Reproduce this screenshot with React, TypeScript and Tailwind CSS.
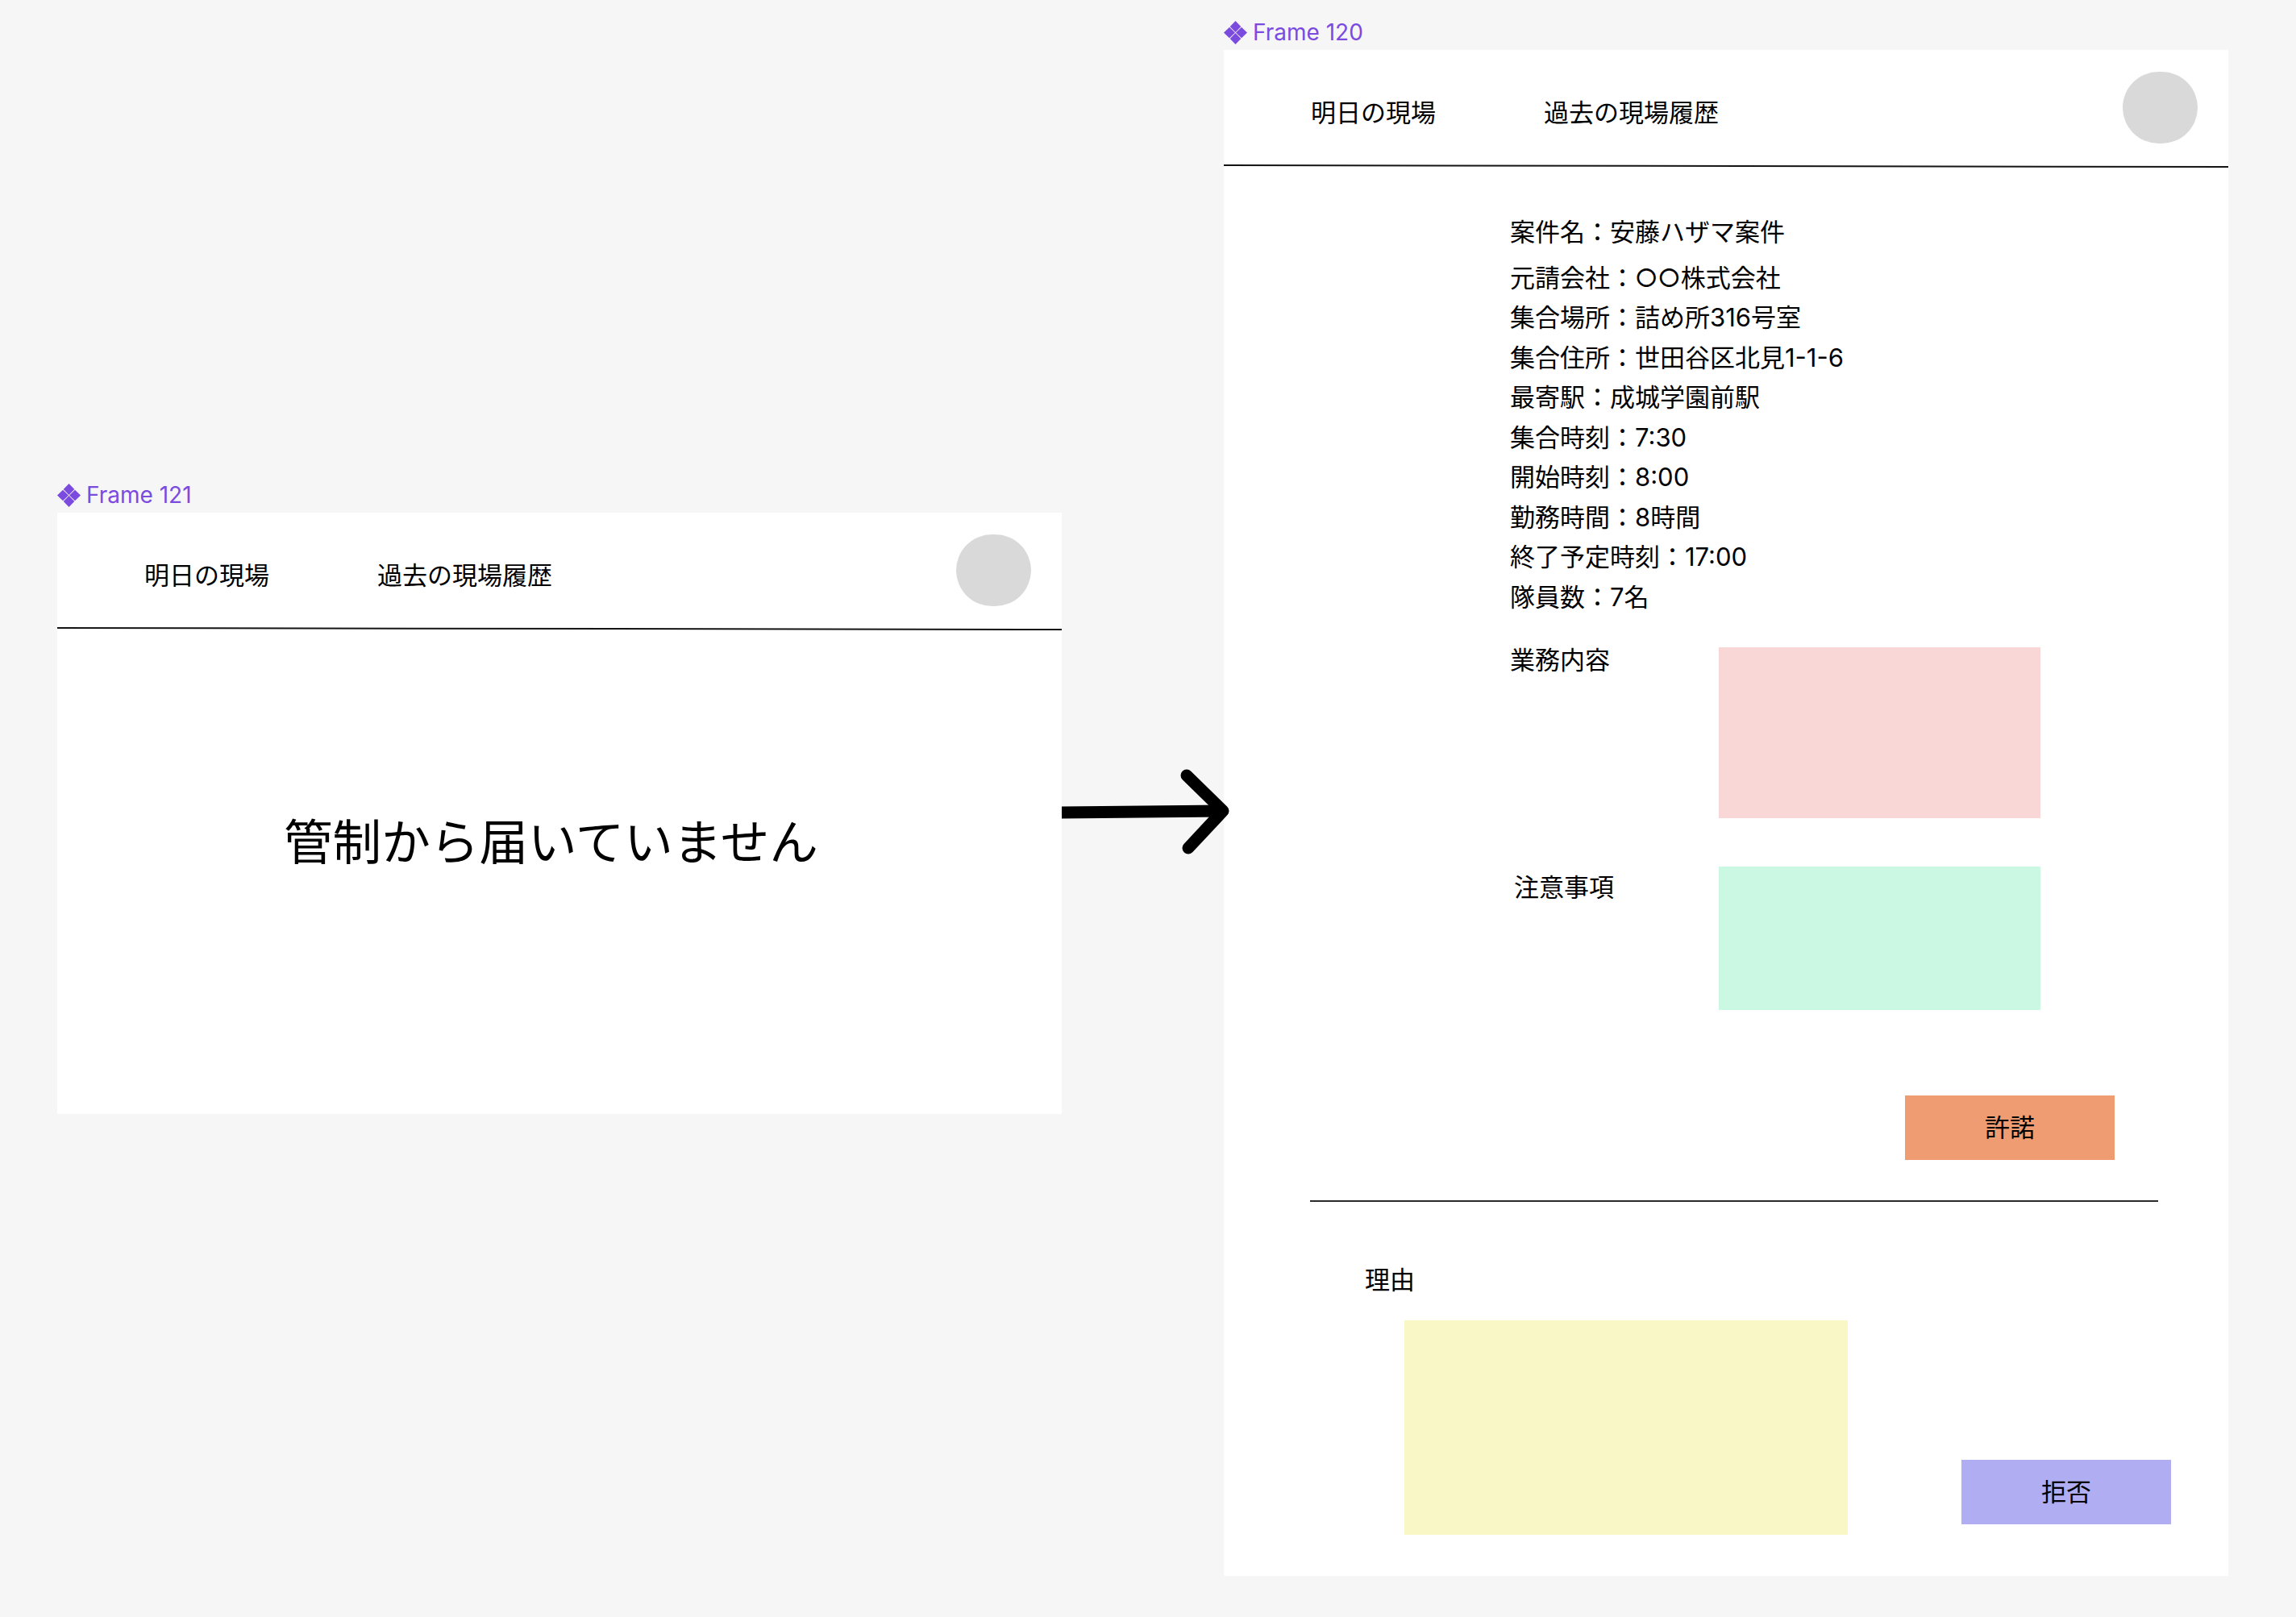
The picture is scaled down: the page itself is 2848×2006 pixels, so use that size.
const NAV_ITEMS = ["明日の現場", "過去の現場履歴"];

const DETAILS = [
  "元請会社：○○株式会社",
  "集合場所：詰め所316号室",
  "集合住所：世田谷区北見1-1-6",
  "最寄駅：成城学園前駅",
  "集合時刻：7:30",
  "開始時刻：8:00",
  "勤務時間：8時間",
  "終了予定時刻：17:00",
  "隊員数：7名",
];

function FrameLabel({ name }: { name: string }) {
  return (
    <div className="flex h-[22px] items-center gap-[7px] text-[#7b4be0] text-[28px] leading-none">
      <svg width="29" height="29" viewBox="0 0 29 29" className="shrink-0" fill="#7b4be0">
        <path d="M14.5 0 L21.3 7 L14.5 14 L7.7 7 Z" />
        <path d="M14.5 15 L21.3 22 L14.5 29 L7.7 22 Z" />
        <path d="M7 7.7 L14 14.5 L7 21.3 L0 14.5 Z" />
        <path d="M22 7.7 L29 14.5 L22 21.3 L15 14.5 Z" />
      </svg>
      <span>{name}</span>
    </div>
  );
}

function AppHeader() {
  return (
    <>
      <header className="flex h-[143px] items-start pl-[108px] pr-[38px]">
        <nav className="mt-[56px] flex gap-[134px] text-[31px] leading-[44px]">
          {NAV_ITEMS.map((item) => (
            <span key={item}>{item}</span>
          ))}
        </nav>
        <div className="ml-auto mt-[27px] h-[89px] w-[93px] rounded-full bg-[#d9d9d9]" />
      </header>
      <div className="h-[2px] rotate-[0.09deg] bg-[#141414]" />
    </>
  );
}

function ActionButton({ label, className }: { label: string; className: string }) {
  return (
    <button className={`flex h-[80px] w-[260px] items-center justify-center text-[31px] ${className}`}>
      {label}
    </button>
  );
}

export default function App() {
  return (
    <div
      className="relative h-[2006px] w-[2848px] overflow-hidden bg-[#f6f6f6] text-black"
      style={{ fontFamily: '"Inter", "Noto Sans CJK JP", sans-serif' }}
    >
      {/* Frame 121 */}
      <section className="absolute left-[71px] top-[603px] w-[1246px]">
        <FrameLabel name="Frame 121" />
        <div className="mt-[11px] h-[746px] bg-white">
          <AppHeader />
          <p className="mt-[222px] pl-[281px] text-[60.6px] leading-[84px]">管制から届いていません</p>
        </div>
      </section>

      {/* Frame 120 */}
      <section className="absolute left-[1518px] top-[29px] w-[1246px]">
        <FrameLabel name="Frame 120" />
        <div className="mt-[11px] h-[1893px] bg-white">
          <AppHeader />
          <div className="pl-[355px]">
            <div className="pt-[56px] text-[31px] leading-[49.5px]">
              <p className="mb-[7px]">案件名：安藤ハザマ案件</p>
              {DETAILS.map((line) => (
                <p key={line}>{line}</p>
              ))}
            </div>
            <div className="mt-[38px] flex">
              <span className="w-[259px] text-[31px] leading-[32px]">業務内容</span>
              <div className="h-[212px] w-[399px] bg-[#f9d7d6]" />
            </div>
            <div className="mt-[60px] flex">
              <span className="ml-[5px] mt-[10px] w-[254px] text-[31px] leading-[32px]">注意事項</span>
              <div className="h-[178px] w-[399px] bg-[#cbf8e2]" />
            </div>
          </div>
          <div className="mt-[106px] flex justify-end pr-[141px]">
            <ActionButton label="許諾" className="bg-[#f09c73]" />
          </div>
          <hr className="ml-[107px] mt-[50px] w-[1052px] border-t-2 border-[#2a2a2a]" />
          <div className="mt-[79px] pl-[175px] text-[31px] leading-[36px]">理由</div>
          <div className="mt-[32px] flex items-end pl-[224px] pr-[71px]">
            <div className="h-[266px] w-[550px] bg-[#f9f7c5]" />
            <ActionButton label="拒否" className="ml-auto mb-[13px] bg-[#b1adf3]" />
          </div>
        </div>
      </section>

      {/* arrow between the frames, drawn over the edge of Frame 120 */}
      <svg className="absolute left-[1317px] top-[950px]" width="212" height="112" viewBox="0 0 212 112" fill="none">
        <path d="M0 58 L200 56" stroke="#000" strokeWidth="15" />
        <path d="M155 12 L200 56 L157 102" stroke="#000" strokeWidth="15" strokeLinecap="round" strokeLinejoin="round" />
      </svg>
    </div>
  );
}
